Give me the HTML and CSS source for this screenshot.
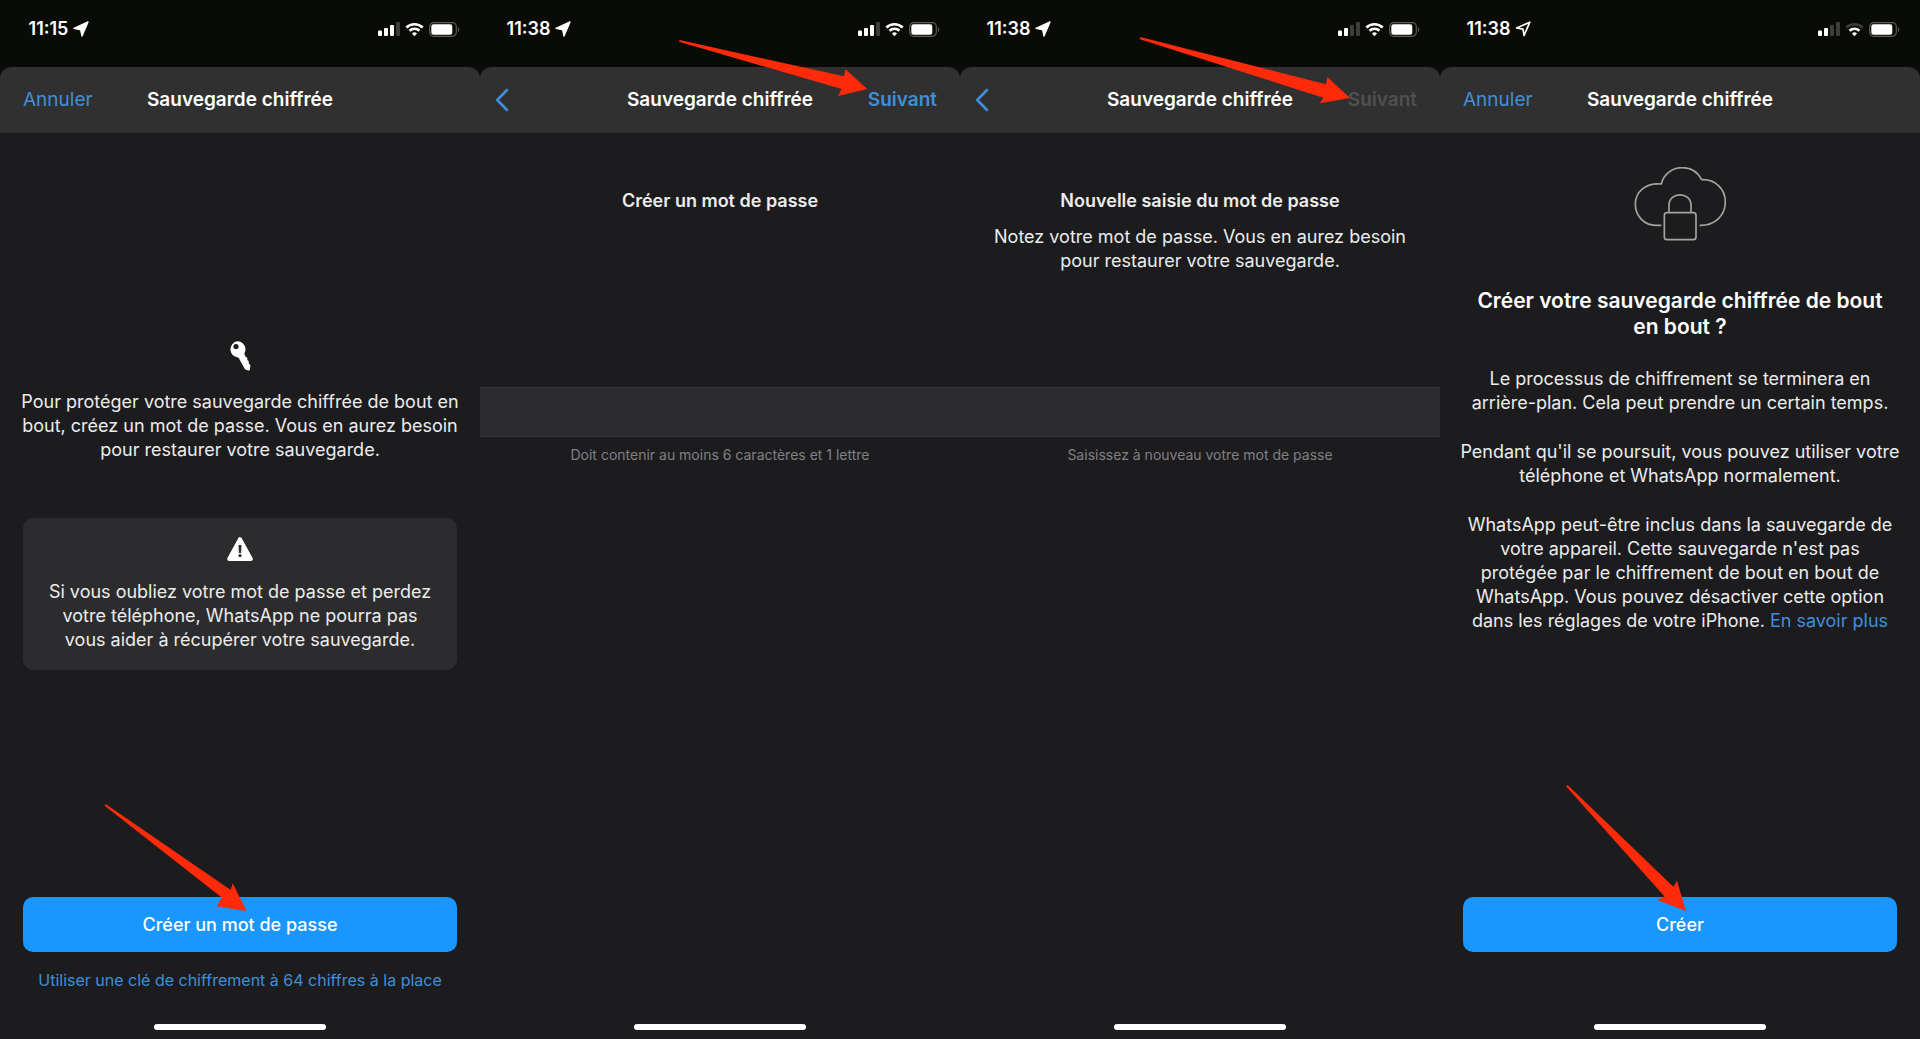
FILE: index.html
```html
<!DOCTYPE html>
<html lang="fr">
<head>
    <meta charset="UTF-8">
    <meta name="viewport" content="width=device-width, initial-scale=1">
    <title>Sauvegarde chiffrée</title>
    <link rel="stylesheet" href="styles.css">
</head>
<body>
<svg class="sprite" aria-hidden="true">
    <symbol id="location" viewBox="0 0 16 16">
        <path d="M15 1 9 15 7.7 8.8 1 7.4z" fill="currentColor" stroke="currentColor" stroke-width="1.4" stroke-linejoin="round"/>
    </symbol>
    <symbol id="location-outline" viewBox="0 0 16 16">
        <path d="M14.8 1.2 9.1 14.5 8 8.2 1.6 7z" fill="none" stroke="currentColor" stroke-width="1.7" stroke-linejoin="round"/>
    </symbol>
    <symbol id="battery" viewBox="0 0 31 15">
        <rect x="0.7" y="0.7" width="26.6" height="13.6" rx="4" fill="none" stroke="#5c5d5a" stroke-width="1.2"/>
        <path d="M29 5.2v4.6c1.6-.6 1.6-4 0-4.6z" fill="#5c5d5a"/>
        <rect x="2.3" y="2.3" width="21" height="10.4" rx="2.2" fill="#fff"/>
    </symbol>
    <symbol id="back" viewBox="0 0 14 24">
        <path d="M12 2 2.2 12 12 22" fill="none" stroke="currentColor" stroke-width="2.6" stroke-linecap="round" stroke-linejoin="round"/>
    </symbol>
</svg>

<main class="screens">
    <section class="screen">
        <div class="status">
            <div class="clock">
                <span>11:15</span>
                <svg class="location"><use href="#location"/></svg>
            </div>
            <div class="indicators">
                <svg class="signal" viewBox="0 0 22 14">
                    <rect x="0" y="8.5" width="4" height="5.5" rx="1"/>
                    <rect x="6" y="6" width="4" height="8" rx="1"/>
                    <rect x="12" y="3" width="4" height="11" rx="1"/>
                    <rect class="off" x="18" y="0" width="4" height="14" rx="1"/>
                </svg>
                <svg class="wifi" viewBox="0 0 18 14">
                    <path d="M1.3 5.1a11 11 0 0 1 15.4 0"/>
                    <path d="M4.3 8.2a6.7 6.7 0 0 1 9.4 0"/>
                    <path class="dot" d="M6.6 10.8a3.4 3.4 0 0 1 4.8 0L9 13.4z"/>
                </svg>
                <svg class="battery"><use href="#battery"/></svg>
            </div>
        </div>
        <div class="sheet">
            <header class="nav">
                <button class="nav-btn" type="button">Annuler</button>
                <h1>Sauvegarde chiffrée</h1>
            </header>
            <div class="intro">
                <svg class="key" viewBox="0 0 22 30">
                    <path fill-rule="evenodd" d="M8.4.3a8.1 8.1 0 0 1 7.3 11.5c-.4.9-.3 1.4.1 2.2l1 1.9 1.7 1.2-.3 1.8 1.7 1.3-.3 1.8 1.8 2.3-.5 4.2c-.1.9-1 1.2-1.9.9l-2.4-.9c-.6-.2-.9-.6-1.2-1.2L10.3 18c-.5-1.1-1-1.6-2.2-1.7A8.1 8.1 0 0 1 8.400.3zM7 3a2.6 2.6 0 1 0 0 5.2A2.6 2.6 0 0 0 7 3z" fill="#fff"/>
                </svg>
                <p>Pour protéger votre sauvegarde chiffrée de bout en bout, créez un mot de passe. Vous en aurez besoin pour restaurer votre sauvegarde.</p>
            </div>
            <div class="notice">
                <svg class="warning" viewBox="0 0 26 24">
                    <path d="M13 2.2 23.8 22H2.2z" fill="#fff" stroke="#fff" stroke-width="4" stroke-linejoin="round"/>
                    <path d="M11.5 8h3l-.4 8h-2.2z" fill="#2c2c2e"/>
                    <circle cx="13" cy="18.6" r="1.6" fill="#2c2c2e"/>
                </svg>
                <p>Si vous oubliez votre mot de passe et perdez votre téléphone, WhatsApp ne pourra pas vous aider à récupérer votre sauvegarde.</p>
            </div>
            <footer class="actions">
                <div class="pointed">
                    <button class="primary" type="button">Créer un mot de passe</button>
                    <svg class="arrow arrow-create" viewBox="309 72 430 324"><path d="M315 72 690 330 696 310 738 394 648 379 663 353 310 76z"/></svg>
                </div>
                <a class="alt" href="#">Utiliser une clé de chiffrement à 64 chiffres à la place</a>
            </footer>
            <div class="home"></div>
        </div>
    </section>

    <section class="screen">
        <div class="status">
            <div class="clock">
                <span>11:38</span>
                <svg class="location"><use href="#location"/></svg>
            </div>
            <div class="indicators">
                <svg class="signal" viewBox="0 0 22 14">
                    <rect x="0" y="8.5" width="4" height="5.5" rx="1"/>
                    <rect x="6" y="6" width="4" height="8" rx="1"/>
                    <rect x="12" y="3" width="4" height="11" rx="1"/>
                    <rect class="off" x="18" y="0" width="4" height="14" rx="1"/>
                </svg>
                <svg class="wifi" viewBox="0 0 18 14">
                    <path d="M1.3 5.1a11 11 0 0 1 15.4 0"/>
                    <path d="M4.3 8.2a6.7 6.7 0 0 1 9.4 0"/>
                    <path class="dot" d="M6.6 10.8a3.4 3.4 0 0 1 4.8 0L9 13.4z"/>
                </svg>
                <svg class="battery"><use href="#battery"/></svg>
            </div>
        </div>
        <div class="sheet">
            <header class="nav">
                <button class="nav-btn back" type="button" aria-label="Retour"><svg><use href="#back"/></svg></button>
                <h1>Sauvegarde chiffrée</h1>
                <button class="nav-btn next" type="button">Suivant</button>
                <svg class="arrow arrow-next" viewBox="597 119 567 168"><path d="M599 119 1092 228 1096 207 1162 266 1074 287 1085 266 597 124z"/></svg>
            </header>
            <form class="password">
                <div class="prompt">
                    <label for="password">Créer un mot de passe</label>
                </div>
                <input id="password" type="password" aria-describedby="password-hint">
                <p class="hint" id="password-hint">Doit contenir au moins 6 caractères et 1 lettre</p>
            </form>
            <div class="home"></div>
        </div>
    </section>

    <section class="screen">
        <div class="status">
            <div class="clock">
                <span>11:38</span>
                <svg class="location"><use href="#location"/></svg>
            </div>
            <div class="indicators">
                <svg class="signal" viewBox="0 0 22 14">
                    <rect x="0" y="8.5" width="4" height="5.5" rx="1"/>
                    <rect x="6" y="6" width="4" height="8" rx="1"/>
                    <rect class="off" x="12" y="3" width="4" height="11" rx="1"/>
                    <rect class="off" x="18" y="0" width="4" height="14" rx="1"/>
                </svg>
                <svg class="wifi" viewBox="0 0 18 14">
                    <path d="M1.3 5.1a11 11 0 0 1 15.4 0"/>
                    <path d="M4.3 8.2a6.7 6.7 0 0 1 9.4 0"/>
                    <path class="dot" d="M6.6 10.8a3.4 3.4 0 0 1 4.8 0L9 13.4z"/>
                </svg>
                <svg class="battery"><use href="#battery"/></svg>
            </div>
        </div>
        <div class="sheet">
            <header class="nav">
                <button class="nav-btn back" type="button" aria-label="Retour"><svg><use href="#back"/></svg></button>
                <h1>Sauvegarde chiffrée</h1>
                <button class="nav-btn next" type="button" disabled>Suivant</button>
                <svg class="arrow arrow-retype" viewBox="540 110 630 201"><path d="M541 110 1098 252 1102 230 1170 293 1080 309 1090 292 540 117z"/></svg>
            </header>
            <form class="password">
                <div class="prompt">
                    <label for="password-again">Nouvelle saisie du mot de passe</label>
                    <p>Notez votre mot de passe. Vous en aurez besoin pour restaurer votre sauvegarde.</p>
                </div>
                <input id="password-again" type="password" aria-describedby="again-hint">
                <p class="hint" id="again-hint">Saisissez à nouveau votre mot de passe</p>
            </form>
            <div class="home"></div>
        </div>
    </section>

    <section class="screen">
        <div class="status">
            <div class="clock">
                <span>11:38</span>
                <svg class="location"><use href="#location-outline"/></svg>
            </div>
            <div class="indicators">
                <svg class="signal" viewBox="0 0 22 14">
                    <rect x="0" y="8.5" width="4" height="5.5" rx="1"/>
                    <rect x="6" y="6" width="4" height="8" rx="1"/>
                    <rect class="off" x="12" y="3" width="4" height="11" rx="1"/>
                    <rect class="off" x="18" y="0" width="4" height="14" rx="1"/>
                </svg>
                <svg class="wifi" viewBox="0 0 18 14">
                    <path class="off" d="M1.3 5.1a11 11 0 0 1 15.4 0"/>
                    <path d="M4.3 8.2a6.7 6.7 0 0 1 9.4 0"/>
                    <path class="dot" d="M6.6 10.8a3.4 3.4 0 0 1 4.8 0L9 13.4z"/>
                </svg>
                <svg class="battery"><use href="#battery"/></svg>
            </div>
        </div>
        <div class="sheet">
            <header class="nav">
                <button class="nav-btn" type="button">Annuler</button>
                <h1>Sauvegarde chiffrée</h1>
            </header>
            <div class="confirm">
                <svg class="cloud" viewBox="583 500 276 222">
                    <path d="M665 675h-16c-36 0-62-29-62-63 0-38 31-66 78-61 6-28 31-49 63-49 26 0 47 14 58 36 42-2 71 29 71 67 0 40-31 71-77 70"/>
                    <path d="M688 637v-22c0-42 66-42 66 0v22"/>
                    <rect x="674" y="637" width="95" height="81" rx="8"/>
                </svg>
                <h2>Créer votre sauvegarde chiffrée de bout en bout ?</h2>
                <p>Le processus de chiffrement se terminera en arrière-plan. Cela peut prendre un certain temps.</p>
                <p>Pendant qu'il se poursuit, vous pouvez utiliser votre téléphone et WhatsApp normalement.</p>
                <p>WhatsApp peut-être inclus dans la sauvegarde de votre appareil. Cette sauvegarde n'est pas protégée par le chiffrement de bout en bout de WhatsApp. Vous pouvez désactiver cette option dans les réglages de votre iPhone. <a href="#">En savoir plus</a></p>
            </div>
            <footer class="actions">
                <div class="pointed">
                    <button class="primary" type="button">Créer</button>
                    <svg class="arrow arrow-confirm" viewBox="378 75 360 378"><path d="M383 75 700 380 711 362 738 453 651 420 673 409 378 79z"/></svg>
                </div>
            </footer>
            <div class="home"></div>
        </div>
    </section>
</main>
</body>
</html>
```
FILE: styles.css
```css
* {
    box-sizing: border-box;
}
body {
    margin: 0;
    background: #090b07;
    color: #ececec;
    font: 18px/24px Inter, "Liberation Sans", sans-serif;
}
h1,
h2,
p {
    margin: 0;
}
a {
    color: #3f8fd9;
    text-decoration: none;
}
button {
    padding: 0;
    border: 0;
    background: none;
    font: inherit;
    cursor: pointer;
}
svg {
    display: block;
}
.sprite {
    position: absolute;
    width: 0;
    height: 0;
}
.screens {
    display: grid;
    grid-template-columns: repeat(4, 1fr);
    min-height: 100vh;
}
.screen {
    display: flex;
    flex-direction: column;
    min-width: 0;
}

/* status bar */
.status {
    display: flex;
    justify-content: space-between;
    align-items: center;
    padding: 17px 20px 26px 0;
    color: #fff;
}
.clock {
    display: flex;
    justify-content: center;
    align-items: center;
    gap: 5px;
    width: 118px;
    font-weight: 600;
}
.location {
    width: 16px;
    height: 16px;
}
.indicators {
    display: flex;
    align-items: center;
    gap: 5px;
}
.signal {
    width: 22px;
    height: 14px;
    fill: #fff;
}
.signal .off {
    fill: #3c3e3a;
}
.wifi {
    width: 19px;
    height: 15px;
    fill: none;
    stroke: #fff;
    stroke-width: 2.4;
}
.wifi .off {
    stroke: #3c3e3a;
}
.wifi .dot {
    fill: #fff;
    stroke: none;
}
.battery {
    width: 31px;
    height: 15px;
}

/* sheet */
.sheet {
    flex: 1;
    display: flex;
    flex-direction: column;
    border-radius: 12px 12px 0 0;
    background: #1c1c1e;
    text-align: center;
}
.nav {
    position: relative;
    display: grid;
    grid-template-columns: 1fr auto 1fr;
    align-items: center;
    height: 66px;
    padding: 0 23px;
    border-radius: 12px 12px 0 0;
    background: #303030;
    font-size: 19px;
}
.nav h1 {
    color: #fff;
    font-size: 19px;
    font-weight: 600;
}
.nav-btn {
    justify-self: start;
    color: #3f8fd9;
}
.nav-btn.back {
    margin-left: -8px;
}
.back svg {
    width: 14px;
    height: 24px;
}
.nav-btn.next {
    justify-self: end;
    font-weight: 600;
}
.nav-btn:disabled {
    color: #505051;
}

.intro {
    padding: 208px 20px 0;
}
.key {
    width: 22px;
    height: 30px;
    margin: 0 auto 19px;
}
.notice {
    margin: 56px 23px 0;
    padding: 19px 24px 18px;
    border-radius: 10px;
    background: #2c2c2e;
}
.warning {
    width: 26px;
    height: 24px;
    margin: 0 auto 19px;
}

.prompt {
    min-height: 254px;
    padding: 56px 30px 0;
}
.prompt label {
    display: block;
    margin-bottom: 12px;
    font-weight: 600;
}
.password input {
    display: block;
    width: 100%;
    height: 50px;
    padding: 0 20px;
    border: solid #3a3a3c;
    border-width: 1px 0;
    border-radius: 0;
    outline: 0;
    background: #2c2c2e;
    color: #ececec;
    font: inherit;
}
.hint {
    margin-top: 6px;
    color: #808085;
    font-size: 14px;
}

.confirm {
    padding: 34px 20px 0;
}
.cloud {
    width: 92px;
    height: 74px;
    margin: 0 auto 47px;
    fill: none;
    stroke: #a3a3a4;
    stroke-width: 5;
    stroke-linejoin: round;
}
.confirm h2 {
    margin-bottom: 27px;
    padding: 0 12px;
    color: #fff;
    font-size: 21px;
    font-weight: 600;
    line-height: 26px;
}
.confirm p {
    margin-bottom: 25px;
}

.actions {
    min-height: 127px;
    margin-top: auto;
    padding: 0 23px;
}
.pointed {
    position: relative;
}
.primary {
    display: block;
    width: 100%;
    height: 55px;
    border-radius: 10px;
    background: #1a96ff;
    color: #fff;
    font-weight: 500;
}
.alt {
    display: block;
    margin-top: 16px;
    font-size: 16px;
}
.home {
    width: 172px;
    height: 6px;
    margin: 0 auto 9px;
    border-radius: 3px;
    background: #fff;
}
.password + .home {
    margin-top: auto;
}

/* red pointers lying over the controls */
.arrow {
    position: absolute;
    fill: #ff2a0a;
    pointer-events: none;
}
.arrow-create {
    top: -93px;
    right: calc(50% - 7px);
    width: 143px;
    height: 108px;
}
.arrow-confirm {
    top: -112px;
    right: calc(50% - 6px);
    width: 120px;
    height: 126px;
}
.arrow-next {
    top: -27px;
    right: 92px;
    width: 189px;
    height: 56px;
}
.arrow-retype {
    top: -30px;
    right: 90px;
    width: 210px;
    height: 67px;
}
```
